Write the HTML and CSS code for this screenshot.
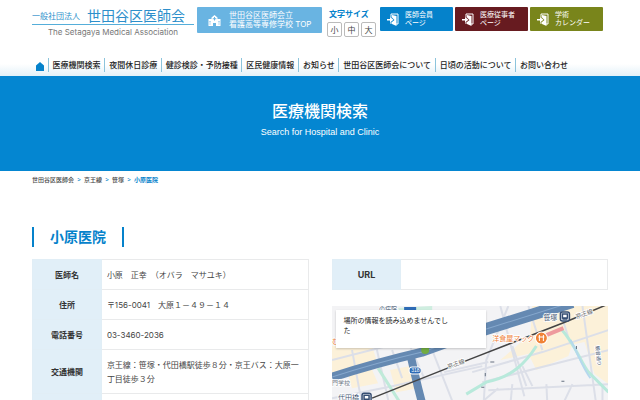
FILE: index.html
```html
<!DOCTYPE html>
<html lang="ja">
<head>
<meta charset="utf-8">
<meta name="viewport" content="width=device-width, initial-scale=1">
<title>小原医院 | 世田谷区医師会</title>
<link rel="stylesheet" href="styles.css">
</head>
<body>
<svg class="defs" aria-hidden="true">
  <symbol id="door" viewBox="0 0 24 26">
    <path d="M8 9V2h14v20h-4M8 18v4" fill="none" stroke="#fff" stroke-width="2"/>
    <path d="M10 4l9 2v20l-9-4v-4l5-4-5-5z" fill="#fff"/>
    <path d="M0 12h6V8l7 5.500-7 5.500v-4H0z" fill="#fff"/>
  </symbol>
</svg>
<header class="site-header wrap">
  <a class="logo" href="#">
    <span class="logo-top"><span class="logo-kind">一般社団法人</span><span class="logo-name">世田谷区医師会</span></span>
    <span class="logo-en">The Setagaya Medical Association</span>
  </a>
  <a class="school" href="#">
    <svg class="school-icon" viewBox="0 0 26 26" aria-hidden="true"><path d="M7 7l6-5 6 5v3h6v14h-9v-6h-6v6H1V10h6z" fill="#fff"/><path d="M13 6v7M9.500 9.500h7M4 14v3M22 14v3M4 19v2M22 19v2" stroke="#69b4e2" stroke-width="2"/></svg>
    <span>世田谷区医師会立<br>看護高等専修学校 TOP</span>
  </a>
  <div class="size">
    <span class="size-label" id="size-label">文字サイズ</span>
    <div class="size-buttons" role="group" aria-labelledby="size-label">
      <button type="button">小</button><button type="button">中</button><button type="button">大</button>
    </div>
  </div>
  <div class="portals">
    <a class="portal member" href="#"><svg aria-hidden="true"><use href="#door"/></svg><span>医師会員<br>ページ</span></a>
    <a class="portal staff" href="#"><svg aria-hidden="true"><use href="#door"/></svg><span>医療従事者<br>ページ</span></a>
    <a class="portal calendar" href="#"><svg aria-hidden="true"><use href="#door"/></svg><span>学術<br>カレンダー</span></a>
  </div>
</header>
<nav class="main-nav">
  <ul class="wrap">
    <li><a class="home" href="#" aria-label="ホーム"><svg viewBox="0 0 8 9" aria-hidden="true"><path d="M4 0l4 3.500V9H0V3.500z" fill="#0582cb"/></svg></a></li>
    <li><a href="#">医療機関検索</a></li>
    <li><a href="#">夜間休日診療</a></li>
    <li><a href="#">健診検診・予防接種</a></li>
    <li><a href="#">区民健康情報</a></li>
    <li><a href="#">お知らせ</a></li>
    <li><a href="#">世田谷区医師会について</a></li>
    <li><a href="#">日頃の活動について</a></li>
    <li><a href="#">お問い合わせ</a></li>
  </ul>
</nav>
<div class="hero">
  <h1>医療機関検索</h1>
  <p>Search for Hospital and Clinic</p>
</div>
<main class="wrap">
  <nav class="crumbs" aria-label="パンくず">
    <a href="#">世田谷区医師会</a><i>&gt;</i><a href="#">京王線</a><i>&gt;</i><a href="#">笹塚</a><i>&gt;</i><strong>小原医院</strong>
  </nav>
  <h2>小原医院</h2>
  <div class="columns">
    <table>
      <tr><th scope="row">医師名</th><td>小原　正幸　（オバラ　マサユキ）</td></tr>
      <tr><th scope="row">住所</th><td>〒156-0041　大原１－４９－１４</td></tr>
      <tr><th scope="row">電話番号</th><td>03-3460-2036</td></tr>
      <tr><th scope="row">交通機関</th><td>京王線：笹塚・代田橋駅徒歩８分・京王バス：大原一丁目徒歩３分</td></tr>
      <tr><th scope="row"></th><td></td></tr>
    </table>
    <div class="side">
      <table>
        <tr><th scope="row">URL</th><td></td></tr>
      </table>
      <div class="map">
        <svg class="map-art" viewBox="0 0 276 120" preserveAspectRatio="xMidYMin slice" role="img" aria-label="地図">
          <rect width="276" height="120" fill="#f3f3f5"/>
          <g fill="#fcf1d9">
            <path d="M200 0h76v78l-14-10-10-32-48 10-36 8 30-26z"/>
            <path d="M0 40h40l5 16-45 14zM14 60l22-5 10 22-26 5zM58 64l20-4 8 22-22 4zM196 48l44-10-4 12-32 14z"/>
          </g>
          <path d="M66 2l34-2v6l-30 4z" fill="#cfeee0"/>
          <g fill="none" stroke="#dcdfe8" stroke-width="2">
            <path d="M20 44l14 76M44 40l18 80M60 44l10 28M76 36l16 36M100 44l30 76M0 92l60-12 90-20M40 120l70-22M112 66l44-10M150 120l4-66 22-54M168 0l24 90M196 0l14 44M226 0l12 38M250 0l14 100M0 54l110-28M140 66l70-20 66-22M150 76l126-32M156 84l120-6M180 40l14 40M190 60l10 20M214 78l2 42M180 78l-4 42M140 104l26-22M270 78v42M240 78l-20 42M84 104l34 16M0 106l30-8"/>
          </g>
          <g fill="none" stroke="#b8e9db" stroke-width="3">
            <path d="M134 88l20-12c26-5 40-20 50-36"/>
            <path d="M228 22c16 18 20 34 28 44l20 20"/>
          </g>
          <path d="M46 62l28 44" fill="none" stroke="#bfead9" stroke-width="3"/>
          <path d="M238 34c8 14 12 28 20 38" fill="none" stroke="#b5d8ed" stroke-width="2"/>
          <g fill="none" stroke="#6589b2">
            <path d="M0 71c34-11 60-18 90-25l64-23" stroke-width="9"/>
            <path d="M120 34l34-11 86-27" stroke-width="12"/>
            <path d="M78 48c6 24 10 48 20 74" stroke-width="8"/>
          </g>
          <path d="M0 71c34-11 60-18 90-25l64-23 86-27" fill="none" stroke="#86a8cd"/>
          <path d="M214 29l17-7" stroke="#ee9a9d" stroke-width="4"/>
          <path d="M40 92l98-39 95-37 43-18" fill="none" stroke="#444" stroke-width="1.500"/>
          <g font-family="Noto Sans CJK JP, sans-serif" font-size="7" stroke="#fff" stroke-width="1.500" paint-order="stroke" fill="#465874">
            <text x="211" y="14">笹塚</text>
            <text x="6" y="94">代田橋</text>
            <text x="0" y="79" font-size="6" fill="#77808a">門学校</text>
            <text x="244" y="13" font-size="6" fill="#666" transform="rotate(-20 244 13)">京王線</text>
            <text x="116" y="63" font-size="6" fill="#666" transform="rotate(-20 116 63)">京王線</text>
            <text x="160" y="35" fill="#ef8139">洋食屋マック</text>
            <text x="47" y="5" font-size="6">の病院</text>
            <text x="0" y="38" fill="#ef8139">む</text>
            <text transform="translate(263 40) rotate(84)" font-size="5">観音通り</text>
          </g>
          <g fill="#fff" stroke="#354d72" stroke-width="1.500">
            <rect x="228" y="6" width="9" height="9" rx="2"/><path d="M230 8h5v4h-5zM230 13h5"/>
            <rect x="30" y="87" width="9" height="9" rx="2"/><path d="M32 89h5v4h-5zM32 94h5"/>
          </g>
          <circle cx="209" cy="32" r="6" fill="#f08337" stroke="#fff"/>
          <path d="M207 29v6M211 29v6M206 31h6" stroke="#fff"/>
          <rect x="77" y="61" width="12" height="7" rx="3" fill="#2e6bb5" stroke="#fff"/>
          <text x="79" y="66" font-family="Liberation Sans, sans-serif" font-size="5" fill="#fff">318</text>
          <path d="M72 1h12v5H72z" fill="#2e6bb5"/>
          <circle cx="93" cy="44" r="4" fill="#72ac42"/>
          <path d="M158 56h4M153 67v3M149 81h3M229 75h3M244 40v3" stroke="#667180"/>
        </svg>
        <p class="map-note">場所の情報を読み込めませんでした</p>
      </div>
    </div>
  </div>
</main>
</body>
</html>
```
FILE: styles.css
```css
* {
  box-sizing: border-box;
}

body {
  margin: 0;
  height: 100vh;
  overflow: hidden;
  background: #fff;
  color: #444;
  font: 8px/12px Inter, "Noto Sans CJK JP", sans-serif;
}

a {
  color: inherit;
  text-decoration: none;
}

h1, h2, p, ul {
  margin: 0;
  padding: 0;
}

.defs {
  position: absolute;
  width: 0;
  height: 0;
}

.wrap {
  width: 90%;
  margin: 0 auto;
}

.site-header {
  display: flex;
  align-items: flex-start;
  padding-top: 7px;
  height: 56px;
}

.logo {
  width: 162px;
  margin-right: 3px;
  color: #2d8fcb;
}

.logo-top {
  display: flex;
  justify-content: space-between;
  align-items: center;
  height: 18px;
  padding-right: 9px;
  border-bottom: 1px solid #55aeda;
  white-space: nowrap;
}

.logo-name {
  font-size: 14px;
}

.logo-en {
  display: block;
  padding-top: 1px;
  text-align: center;
  color: #777;
}

.school {
  display: flex;
  align-items: center;
  gap: 8px;
  width: 125px;
  height: 26px;
  padding-left: 11px;
  border-radius: 1px;
  background: #69b4e2;
  color: #fff;
  line-height: 9px;
  white-space: nowrap;
}

.school-icon {
  width: 13px;
  height: 13px;
}

.size {
  margin-left: 5px;
}

.size-label {
  display: block;
  padding-left: 2px;
  color: #0582cb;
  font-weight: 700;
  line-height: 15px;
}

.size-buttons {
  display: flex;
  gap: 2px;
}

.size-buttons button {
  width: 15px;
  height: 15px;
  padding: 0;
  border: 1px solid #bbb;
  border-radius: 2px;
  background: #fff;
  color: #444;
  font: inherit;
}

.portals {
  display: flex;
  gap: 2px;
  margin-left: 4px;
}

.portal {
  display: flex;
  align-items: center;
  gap: 6px;
  width: 73px;
  height: 24px;
  padding-left: 7px;
  border-radius: 1px;
  color: #fff;
  font-size: 7px;
  line-height: 8px;
  white-space: nowrap;
}

.portal svg {
  width: 12px;
  height: 13px;
}

.member {
  background: #0582cb;
}

.staff {
  background: #671b20;
}

.calendar {
  background: #79851b;
}

.main-nav {
  height: 20px;
  padding-top: 2px;
  background: linear-gradient(#fff 40%, #e3f1f8);
}

.main-nav ul {
  display: flex;
  justify-content: space-between;
  padding-right: 37px;
  list-style: none;
}

.main-nav li {
  padding: 0 3px 0 4px;
  color: #222;
  font-weight: 500;
  line-height: 14px;
  white-space: nowrap;
}

.main-nav li + li {
  border-left: 1px solid #8cc4dc;
}

.home svg {
  display: block;
  width: 8px;
  height: 9px;
  margin-top: 4px;
}

.hero {
  height: 95px;
  padding-top: 23px;
  background: #0486d1;
  color: #fff;
  text-align: center;
}

.hero h1 {
  font-size: 16px;
  font-weight: 500;
  line-height: 24px;
}

.hero p {
  padding-top: 3px;
  font: 9px/12px "Liberation Sans", sans-serif;
}

.crumbs {
  display: flex;
  gap: 3px;
  padding-top: 3px;
  font-size: 6px;
  font-weight: 500;
}

.crumbs i {
  color: #0582cb;
  font-style: normal;
}

.crumbs strong {
  color: #0582cb;
}

h2 {
  width: max-content;
  margin-top: 41px;
  padding: 0 16px;
  border: solid #0582cb;
  border-width: 0 2px;
  color: #0582cb;
  font-size: 14px;
  line-height: 20px;
}

.columns {
  display: grid;
  grid-template-columns: 1fr 1fr;
  align-items: start;
  gap: 23px;
  margin-top: 12px;
}

table {
  width: 100%;
  border-collapse: collapse;
  table-layout: fixed;
}

th, td {
  height: 30px;
  padding: 8px 5px 7px;
  border: 1px solid #e9eaeb;
  line-height: 14px;
  text-align: left;
}

th {
  width: 25%;
  padding: 8px 0 7px;
  border-color: #e1eef6;
  background: #e1eff8;
  color: #333;
  text-align: center;
}

.side th {
  font-size: 9px;
}

.map {
  position: relative;
  margin-top: 16px;
}

.map-art {
  display: block;
  width: 100%;
}

.map-note {
  position: absolute;
  top: 4px;
  left: 4px;
  width: 150px;
  height: 38px;
  padding: 6px 36px 0 8px;
  background: #fff;
  box-shadow: 0 1px 2px rgb(0 0 0 / 20%);
  color: #222;
  font-size: 7px;
  line-height: 10px;
}
```
